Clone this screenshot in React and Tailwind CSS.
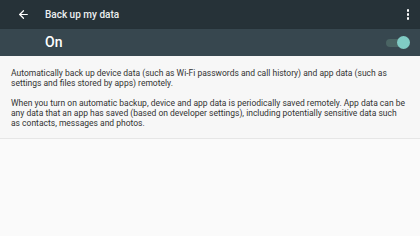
import { ArrowLeft } from "lucide-react";

const App = () => {
  return (
    <div className="w-[420px] h-[236px] bg-[#fafafa] overflow-hidden" style={{ fontFamily: "Roboto, 'Liberation Sans', sans-serif" }}>
      {/* TOOLBAR */}
      <div className="h-[29px] bg-[#263238] flex items-center text-white">
        <div className="w-[45px] flex justify-center pl-[2px]">
          <ArrowLeft size={13} strokeWidth={2.2} />
        </div>
        <span className="text-[10px] font-medium text-[#eceff1] flex-1">Back up my data</span>
        <div className="w-[28px] flex flex-col items-center gap-[1.5px] pl-[4px]">
          <span className="w-[2.5px] h-[2.5px] rounded-full bg-white" />
          <span className="w-[2.5px] h-[2.5px] rounded-full bg-white" />
          <span className="w-[2.5px] h-[2.5px] rounded-full bg-white" />
        </div>
      </div>

      {/* SWITCH BAR */}
      <div className="h-[27px] bg-[#37474f] flex items-center pl-[45px] pr-[12px] shadow-[0_1px_2px_rgba(0,0,0,0.25)]">
        <span className="text-[14px] font-medium text-white flex-1">On</span>
        <div className="relative w-[20px] h-[8px] rounded-full bg-[#4a6463] mr-[2px]">
          <span className="absolute right-[-4px] top-[-3px] w-[13px] h-[13px] rounded-full bg-[#80cbc4]" />
        </div>
      </div>

      {/* DESCRIPTION */}
      <div className="bg-[#f7f7f7] border-b border-[#e6e6e6] pl-[11px] pr-[14px] pt-[12px] pb-[10px] text-[8.5px] leading-[10px] text-[#333]">
        <p>
          Automatically back up device data (such as Wi-Fi passwords and call history) and app data (such as settings and files stored by apps) remotely.
        </p>
        <p className="mt-[10px]">
          When you turn on automatic backup, device and app data is periodically saved remotely. App data can be any data that an app has saved (based on developer settings), including potentially sensitive data such as contacts, messages and photos.
        </p>
      </div>
    </div>
  );
};

export default App;
